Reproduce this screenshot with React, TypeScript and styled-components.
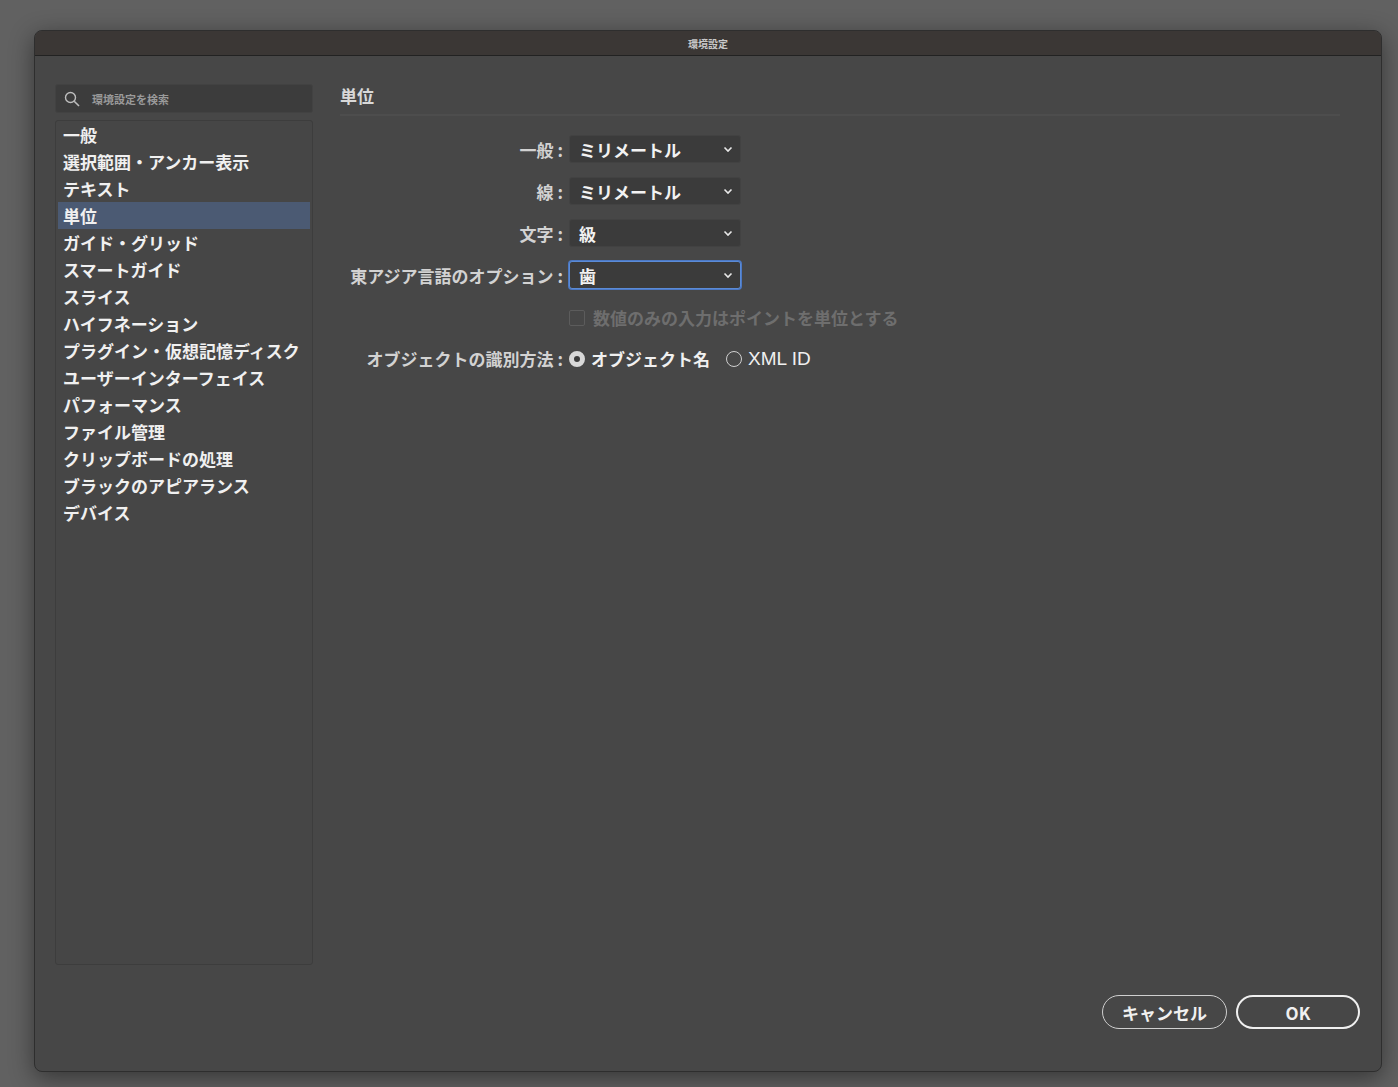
import React from 'react';
import styled, { createGlobalStyle } from 'styled-components';

const Global = createGlobalStyle`
  html, body { margin: 0; padding: 0; background: #616161; }
  body { font-family: "Noto Sans CJK JP", "Liberation Sans", sans-serif; }
`;

const Page = styled.div`
  width: 1398px;
  height: 1087px;
  padding: 30px 16px 17px 34px;
  box-sizing: border-box;
`;

const Dialog = styled.div`
  height: 100%;
  background: #474747;
  border-radius: 8px;
  border: 1px solid #2e2e2e;
  box-shadow: 0 6px 24px rgba(0, 0, 0, 0.45);
  display: flex;
  flex-direction: column;
  overflow: hidden;
`;

const TitleBar = styled.div`
  height: 24px;
  background: #3b3735;
  border-bottom: 1px solid #222;
  color: #c8c8c8;
  font-size: 10px;
  font-weight: 700;
  display: flex;
  align-items: center;
  justify-content: center;
  flex-shrink: 0;
`;

const Body = styled.div`
  flex: 1;
  display: flex;
  padding: 29px 21px 0 20px;
  gap: 27px;
  position: relative;
`;

const Sidebar = styled.div`
  width: 258px;
  display: flex;
  flex-direction: column;
  gap: 9px;
  padding-bottom: 106px;
`;

const Search = styled.div`
  height: 27px;
  background: #3c3c3c;
  border: 1px solid #424242;
  border-radius: 3px;
  display: flex;
  align-items: center;
  gap: 12px;
  padding: 0 8px;
  color: #9a9a9a;
  font-size: 11px;
  font-weight: 700;
  margin-top: -1px;
`;

const List = styled.div`
  flex: 1;
  border: 1px solid #3d3d3d;
  background: #464646;
  border-radius: 3px;
  padding: 0 2px;
  display: flex;
  flex-direction: column;
  margin-top: -2px;
`;

const Item = styled.div<{ selected?: boolean }>`
  height: 27px;
  display: flex;
  align-items: center;
  padding-left: 5px;
  font-size: 17px;
  font-weight: 700;
  color: #f0f0f0;
  background: ${p => (p.selected ? '#4b5a73' : 'transparent')};
  white-space: nowrap;
`;

const Main = styled.div`
  flex: 1;
  display: flex;
  flex-direction: column;
`;

const Heading = styled.div`
  font-size: 17px;
  font-weight: 700;
  color: #d8d8d8;
  padding: 0 0 6px 0;
  border-bottom: 2px solid #4d4d4d;
  margin-right: 20px;
  margin-top: -2px;
`;

const Form = styled.div`
  display: grid;
  grid-template-columns: 223px auto;
  column-gap: 6px;
  row-gap: 14px;
  align-items: center;
  margin-top: 19px;
`;

const Label = styled.div`
  text-align: right;
  font-size: 17px;
  font-weight: 700;
  color: #d2d2d2;
  white-space: nowrap;
`;

const Select = styled.div<{ focused?: boolean }>`
  width: 172px;
  height: 28px;
  box-sizing: border-box;
  background: #3b3b3b;
  border: 1px solid ${p => (p.focused ? '#5b8bd6' : '#424242')};
  box-shadow: ${p => (p.focused ? '0 0 0 1px #4b78c4' : 'none')};
  border-radius: 3px;
  display: flex;
  align-items: center;
  justify-content: space-between;
  padding: 0 5px 0 9px;
  font-size: 17px;
  font-weight: 700;
  color: #f2f2f2;
`;

const CheckRow = styled.div`
  display: flex;
  align-items: center;
  gap: 8px;
  font-size: 17px;
  font-weight: 700;
  color: #6e6e6e;
  margin: 2px 0;
`;

const Box = styled.span`
  width: 14px;
  height: 14px;
  border: 1px solid #5c5c5c;
  border-radius: 2px;
`;

const RadioGroup = styled.div`
  display: flex;
  align-items: center;
  gap: 16px;
`;

const RadioOpt = styled.label`
  display: flex;
  align-items: center;
  gap: 6px;
  font-size: 17px;
  font-weight: 700;
  color: #f0f0f0;
`;

const Latin = styled.span`
  font-family: "Liberation Sans", sans-serif;
  font-weight: 400;
  font-size: 19px;
`;

const Dot = styled.span<{ on?: boolean }>`
  width: 16px;
  height: 16px;
  border-radius: 50%;
  box-sizing: border-box;
  border: ${p => (p.on ? '5px solid #d8d8d8' : '1.5px solid #cfcfcf')};
  background: ${p => (p.on ? '#3b3b3b' : 'transparent')};
`;

const Buttons = styled.div`
  position: absolute;
  right: 21px;
  bottom: 42px;
  display: flex;
  gap: 9px;
`;

const Button = styled.button<{ primary?: boolean }>`
  width: ${p => (p.primary ? '124px' : '125px')};
  height: 34px;
  border-radius: 17px;
  background: transparent;
  border: ${p => (p.primary ? '2px solid #f0f0f0' : '1.5px solid #cfcfcf')};
  color: #f0f0f0;
  font-size: 17px;
  font-weight: 700;
  font-family: "Noto Sans CJK JP", "Liberation Sans", sans-serif;
`;

const Chevron = () => (
  <svg width="14" height="14" viewBox="0 0 14 14">
    <path d="M3.5 5.5 L7 9 L10.5 5.5" stroke="#e8e8e8" strokeWidth="1.6" fill="none" />
  </svg>
);

const categories = [
  '一般', '選択範囲・アンカー表示', 'テキスト', '単位', 'ガイド・グリッド', 'スマートガイド',
  'スライス', 'ハイフネーション', 'プラグイン・仮想記憶ディスク', 'ユーザーインターフェイス',
  'パフォーマンス', 'ファイル管理', 'クリップボードの処理', 'ブラックのアピアランス', 'デバイス',
];

const units = [
  { label: '一般 :', value: 'ミリメートル' },
  { label: '線 :', value: 'ミリメートル' },
  { label: '文字 :', value: '級' },
  { label: '東アジア言語のオプション :', value: '歯', focused: true },
];

export default function App() {
  return (
    <Page>
      <Global />
      <Dialog>
        <TitleBar>環境設定</TitleBar>
        <Body>
          <Sidebar>
            <Search>
              <svg width="16" height="16" viewBox="0 0 16 16">
                <circle cx="6.5" cy="6.5" r="5" stroke="#bdbdbd" strokeWidth="1.4" fill="none" />
                <path d="M10.2 10.2 L15 15" stroke="#bdbdbd" strokeWidth="1.6" />
              </svg>
              環境設定を検索
            </Search>
            <List>
              {categories.map(c => (
                <Item key={c} selected={c === '単位'}>{c}</Item>
              ))}
            </List>
          </Sidebar>
          <Main>
            <Heading>単位</Heading>
            <Form>
              {units.map(u => (
                <React.Fragment key={u.label}>
                  <Label>{u.label}</Label>
                  <Select focused={u.focused}>
                    {u.value}
                    <Chevron />
                  </Select>
                </React.Fragment>
              ))}
              <div />
              <CheckRow>
                <Box />
                数値のみの入力はポイントを単位とする
              </CheckRow>
              <Label>オブジェクトの識別方法 :</Label>
              <RadioGroup>
                <RadioOpt><Dot on />オブジェクト名</RadioOpt>
                <RadioOpt><Dot /><Latin>XML ID</Latin></RadioOpt>
              </RadioGroup>
            </Form>
          </Main>
          <Buttons>
            <Button>キャンセル</Button>
            <Button primary>OK</Button>
          </Buttons>
        </Body>
      </Dialog>
    </Page>
  );
}
